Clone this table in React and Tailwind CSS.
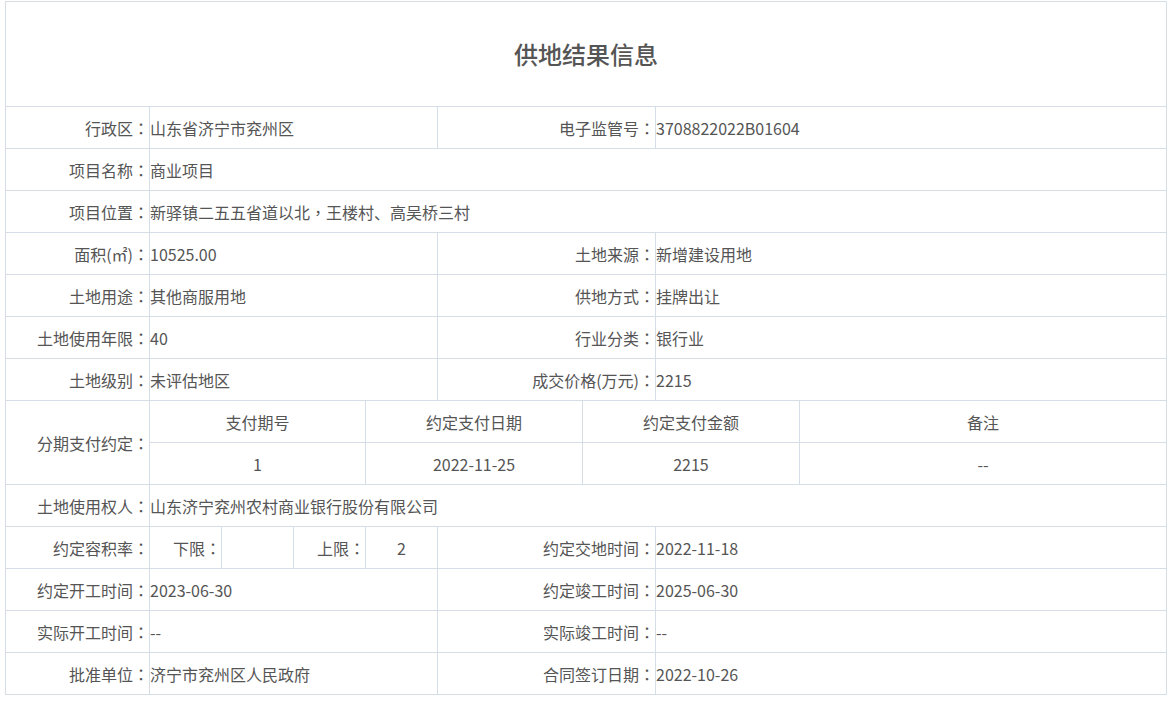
import React from "react";

const font = { fontFamily: '"Noto Sans CJK SC", "Noto Sans", sans-serif' };
const jp = { fontFamily: '"Noto Sans CJK JP", "Noto Sans CJK SC", sans-serif' };
const tc = { fontFamily: '"Noto Sans CJK TC", "Noto Sans CJK SC", sans-serif' };

const Colon = () => <span style={jp}>：</span>;

const withColon = (children) => {
  if (typeof children === "string" && children.endsWith("：")) {
    return (
      <>
        {children.slice(0, -1)}
        <Colon />
      </>
    );
  }
  return children;
};

const L = ({ children, colSpan }) => (
  <td colSpan={colSpan} className="h-[42px] border border-[#d5dde6] text-right pr-0 whitespace-nowrap">
    {withColon(children)}
  </td>
);
const V = ({ children, colSpan }) => (
  <td colSpan={colSpan} className="h-[42px] border border-[#d5dde6] text-left pl-0 whitespace-nowrap">
    {children}
  </td>
);
const C = ({ children, colSpan }) => (
  <td colSpan={colSpan} className="h-[42px] border border-[#d5dde6] text-center whitespace-nowrap">
    {children}
  </td>
);

export default function App() {
  return (
    <div className="bg-white w-[1170px] h-[701px] pt-[1px] pl-[5px]" style={font}>
      <table className="border-collapse table-fixed w-[1161px] text-[16px] text-[#555]">
        <colgroup>
          <col className="w-[144px]" />
          <col className="w-[72px]" />
          <col className="w-[72px]" />
          <col className="w-[72px]" />
          <col className="w-[72px]" />
          <col className="w-[145px]" />
          <col className="w-[73px]" />
          <col className="w-[144px]" />
          <col className="w-[367px]" />
        </colgroup>
        <tbody>
          <tr>
            <td colSpan={9} className="h-[105px] border border-[#d5dde6] text-center text-[24px] font-medium text-[#555]">
              供地结果信息
            </td>
          </tr>
          <tr>
            <L>行政区：</L>
            <V colSpan={4}>山东省济宁市兖州区</V>
            <L colSpan={2}>电子监管号：</L>
            <V colSpan={2}>3708822022B01604</V>
          </tr>
          <tr>
            <L>项目名称：</L>
            <V colSpan={8}>商业项目</V>
          </tr>
          <tr>
            <L>项目位置：</L>
            <V colSpan={8}>
              新驿镇二五五省道以北<span style={tc}>，</span>王楼村、高吴桥三村
            </V>
          </tr>
          <tr>
            <L>面积(㎡)：</L>
            <V colSpan={4}>10525.00</V>
            <L colSpan={2}>土地来源：</L>
            <V colSpan={2}>新增建设用地</V>
          </tr>
          <tr>
            <L>土地用途：</L>
            <V colSpan={4}>其他商服用地</V>
            <L colSpan={2}>供地方式：</L>
            <V colSpan={2}>挂牌出让</V>
          </tr>
          <tr>
            <L>土地使用年限：</L>
            <V colSpan={4}>40</V>
            <L colSpan={2}>行业分类：</L>
            <V colSpan={2}>银行业</V>
          </tr>
          <tr>
            <L>土地级别：</L>
            <V colSpan={4}>未评估地区</V>
            <L colSpan={2}>成交价格(万元)：</L>
            <V colSpan={2}>2215</V>
          </tr>
          <tr>
            <td rowSpan={2} className="border border-[#d5dde6] text-right whitespace-nowrap">
              分期支付约定<Colon />
            </td>
            <C colSpan={3}>支付期号</C>
            <C colSpan={2}>约定支付日期</C>
            <C colSpan={2}>约定支付金额</C>
            <C>备注</C>
          </tr>
          <tr>
            <C colSpan={3}>1</C>
            <C colSpan={2}>2022-11-25</C>
            <C colSpan={2}>2215</C>
            <C>--</C>
          </tr>
          <tr>
            <L>土地使用权人：</L>
            <V colSpan={8}>山东济宁兖州农村商业银行股份有限公司</V>
          </tr>
          <tr>
            <L>约定容积率：</L>
            <L>下限：</L>
            <C></C>
            <L>上限：</L>
            <C>2</C>
            <L colSpan={2}>约定交地时间：</L>
            <V colSpan={2}>2022-11-18</V>
          </tr>
          <tr>
            <L>约定开工时间：</L>
            <V colSpan={4}>2023-06-30</V>
            <L colSpan={2}>约定竣工时间：</L>
            <V colSpan={2}>2025-06-30</V>
          </tr>
          <tr>
            <L>实际开工时间：</L>
            <V colSpan={4}>--</V>
            <L colSpan={2}>实际竣工时间：</L>
            <V colSpan={2}>--</V>
          </tr>
          <tr>
            <L>批准单位：</L>
            <V colSpan={4}>济宁市兖州区人民政府</V>
            <L colSpan={2}>合同签订日期：</L>
            <V colSpan={2}>2022-10-26</V>
          </tr>
        </tbody>
      </table>
    </div>
  );
}
